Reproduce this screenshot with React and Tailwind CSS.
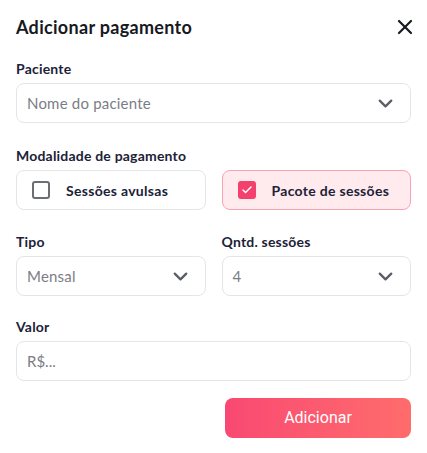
import React, { useState } from "react";
import { X, ChevronDown, Check } from "lucide-react";

const font = { fontFamily: "Lato, 'Noto Sans', sans-serif" };

const Label = ({ children }) => (
  <span className="block text-[14px] leading-5 font-bold text-[#1c2237] tracking-[0.2px]">{children}</span>
);

const Select = ({ value }) => (
  <div className="mt-1 h-10 w-full rounded-lg border border-[#e3e5e8] bg-white flex items-center justify-between pl-[10px] pr-[13px]">
    <span className="text-[15px] text-[#7b7d85] tracking-[0.2px]">{value}</span>
    <ChevronDown size={23} strokeWidth={2.4} className="text-[#5b5e66]" />
  </div>
);

const Option = ({ label, checked, onClick }) => (
  <button
    onClick={onClick}
    className={
      checked
        ? "h-10 flex-1 rounded-lg border border-[#f7a3b5] bg-[#ffeaee] flex items-center pl-[15px]"
        : "h-10 flex-1 rounded-lg border border-[#e3e5e8] bg-white flex items-center pl-[15px]"
    }
  >
    {checked ? (
      <span className="w-[18px] h-[18px] rounded-[3px] bg-[#f4406c] flex items-center justify-center">
        <Check size={12} strokeWidth={3} className="text-white" />
      </span>
    ) : (
      <span className="w-[18px] h-[18px] rounded-[3px] border-2 border-[#6b6e74]" />
    )}
    <span className="ml-4 whitespace-nowrap text-[14px] font-bold text-[#1c2237] tracking-[0.3px]">{label}</span>
  </button>
);

export default function App() {
  const [mode, setMode] = useState("pacote");

  return (
    <div style={font} className="w-[427px] h-[453px] bg-white rounded-xl px-4 pt-[13px]">
      <div className="flex items-center justify-between h-7">
        <h2 className="text-[18px] font-bold text-[#17191f] tracking-[0.3px]">Adicionar pagamento</h2>
        <X size={24} strokeWidth={2.2} className="text-[#17191f] -mr-[6px]" />
      </div>

      <div className="mt-[18px]">
        <Label>Paciente</Label>
        <Select value="Nome do paciente" />
      </div>

      <div className="mt-[23px]">
        <Label>Modalidade de pagamento</Label>
        <div className="mt-1 flex gap-4">
          <Option label="Sessões avulsas" checked={mode === "avulsas"} onClick={() => setMode("avulsas")} />
          <Option label="Pacote de sessões" checked={mode === "pacote"} onClick={() => setMode("pacote")} />
        </div>
      </div>

      <div className="mt-[22px] flex gap-4">
        <div className="flex-1">
          <Label>Tipo</Label>
          <Select value="Mensal" />
        </div>
        <div className="flex-1">
          <Label>Qntd. sessões</Label>
          <Select value="4" />
        </div>
      </div>

      <div className="mt-[21px]">
        <Label>Valor</Label>
        <input
          placeholder="R$..."
          className="mt-1 h-10 w-full rounded-lg border border-[#e3e5e8] px-[10px] text-[15px] placeholder:text-[#7b7d85] outline-none"
        />
      </div>

      <div className="mt-[17px] flex justify-end">
        <button
          style={{ fontFamily: "Roboto, sans-serif" }}
          className="w-[186px] h-10 rounded-lg bg-gradient-to-r from-[#f94872] to-[#ff6c6c] text-white text-[16px]"
        >
          Adicionar
        </button>
      </div>
    </div>
  );
}
